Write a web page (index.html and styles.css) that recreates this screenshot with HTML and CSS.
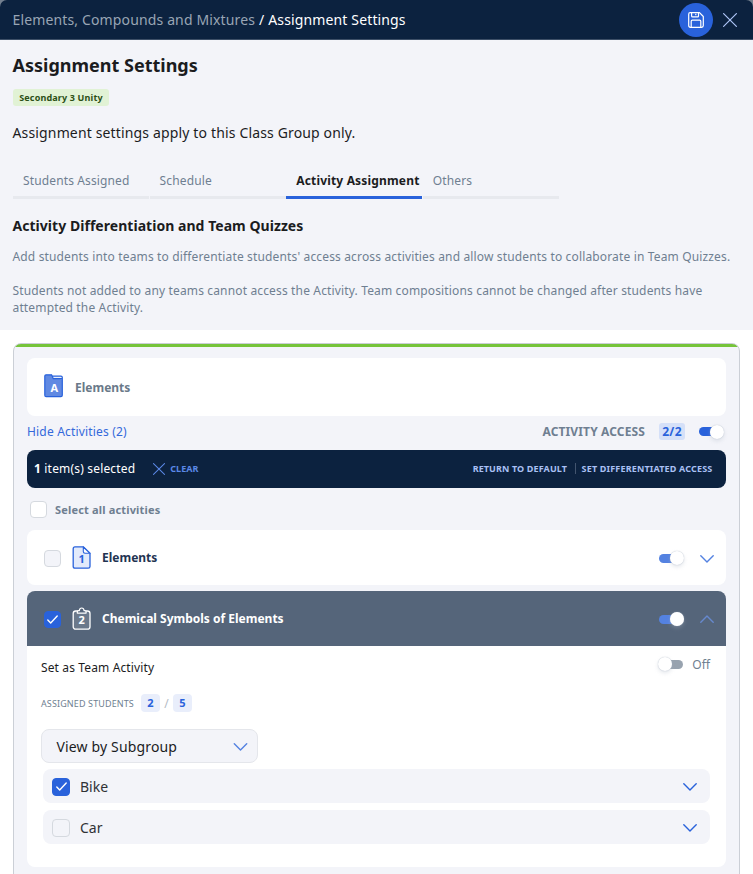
FILE: index.html
```html
<!DOCTYPE html>
<html lang="en">
<head>
<meta charset="utf-8">
<title>Assignment Settings</title>
<link rel="stylesheet" href="styles.css">
</head>
<body>
<svg width="0" height="0" class="defs">
  <symbol id="chevron" viewBox="0 0 14 8"><path d="M.8 .8 7 7 13.2 .8" fill="none" stroke="currentColor" stroke-width="1.4" stroke-linecap="round" stroke-linejoin="round"/></symbol>
  <symbol id="cross" viewBox="0 0 14 14"><path d="M.6.6 13.4 13.4M13.4.6.6 13.4" fill="none" stroke="currentColor" stroke-width="1.2" stroke-linecap="round"/></symbol>
  <symbol id="check" viewBox="0 0 11 9"><path d="M.8 4.9 3.7 7.9 10.2.9" fill="none" stroke="#fff" stroke-width="1.4" stroke-linecap="round" stroke-linejoin="round"/></symbol>
</svg>
<div class="backdrop">
<header class="topbar">
  <div class="crumbs"><span class="crumb-parent">Elements, Compounds and Mixtures</span><span class="crumb-current">/ Assignment Settings</span></div>
  <button class="save" aria-label="Save"><svg width="16" height="16" viewBox="0 0 16 16" fill="none" stroke="#fff" stroke-width="1.2" stroke-linejoin="round"><path d="M2.2.7H11.5L15.3 4.5V13.6Q15.3 15.3 13.6 15.3H2.4Q.7 15.3 .7 13.6V2.2Q.7.7 2.2.7Z"/><path d="M3.6.8V4Q3.6 4.9 4.5 4.9H9.6Q10.5 4.9 10.5 4V.8M7.8 1.8V3.3M3.2 15.2V9.2Q3.2 8.1 4.3 8.1H11.7Q12.8 8.1 12.8 9.2V15.2"/></svg></button>
  <svg class="close" width="14" height="14"><use href="#cross"/></svg>
</header>
</div>
<section class="intro">
  <h1>Assignment Settings</h1>
  <span class="tag"><span>Secondary 3 Unity</span></span>
  <p class="lead">Assignment settings apply to this Class Group only.</p>
  <nav class="tabs">
    <a class="tab"><span>Students Assigned</span></a>
    <a class="tab"><span>Schedule</span></a>
    <a class="tab active"><span>Activity Assignment</span></a>
    <a class="tab"><span>Others</span></a>
  </nav>
  <h2>Activity Differentiation and Team Quizzes</h2>
  <p class="note">Add students into teams to differentiate students' access across activities and allow students to collaborate in Team Quizzes.</p>
  <p class="note">Students not added to any teams cannot access the Activity. Team compositions cannot be changed after students have<br>attempted the Activity.</p>
</section>
<main class="panel">
  <div class="section-card">
    <svg width="20" height="24" viewBox="0 0 20 24"><path d="M2.2.7H7.8L9.3 4.2 18.2 5.2V21.2Q18.2 22.6 16.8 22.6H2.2Q.8 22.6.8 21.2V2Q.8.7 2.2.7Z" fill="#6089e2"/><path d="M8.8 2.2H18.2V5H9.5Z" fill="#e9effb"/><path d="M2 .8H7.6L9.3 4.7H18.3V21.3Q18.3 22.7 16.9 22.7H2.1Q.8 22.7.8 21.3V2Q.8.8 2 .8ZM8.2 2.1H17Q18.3 2.1 18.3 3.4V5" fill="none" stroke="#2962db" stroke-width="1.2"/><text x="10.2" y="17.5" class="icon-letter">A</text></svg>
    <span>Elements</span>
  </div>
  <div class="access-row">
    <a class="hide">Hide Activities (2)</a>
    <span class="access-label">ACTIVITY ACCESS</span>
    <span class="count">2/2</span>
    <span class="toggle"><i></i></span>
  </div>
  <div class="selection">
    <span class="selected"><b>1</b> item(s) selected</span>
    <svg class="clear-x" width="12" height="12"><use href="#cross"/></svg>
    <span class="clear">CLEAR</span>
    <span class="action ret">RETURN TO DEFAULT</span>
    <span class="action diff">SET DIFFERENTIATED ACCESS</span>
  </div>
  <div class="select-all"><span class="box white"></span><span class="sel-text">Select all activities</span></div>
  <div class="activity">
    <span class="box"></span>
    <svg class="act-icon" width="20" height="24" viewBox="0 0 20 24"><path d="M3 .9H11.4L18 7.2V20.4Q18 22.2 16.2 22.2H3Q1.2 22.2 1.2 20.4V2.7Q1.2.9 3 .9Z" fill="#e2eafb" stroke="#2962db" stroke-width="1.3"/><path d="M11.3 1V5.6Q11.3 7.3 13 7.3H18Z" fill="#fff" stroke="#2962db" stroke-width="1.1" stroke-linejoin="round"/><text x="9.6" y="17.3" class="icon-letter blue">1</text></svg>
    <span class="act-name">Elements</span>
    <span class="toggle soft"><i></i></span>
    <svg class="act-chev" width="14" height="8"><use href="#chevron"/></svg>
  </div>
  <div class="activity open">
    <span class="box on"><svg width="11" height="9"><use href="#check"/></svg></span>
    <svg class="act-icon" width="20" height="24" viewBox="0 0 20 24"><rect x="1.2" y="4" width="16.8" height="18.2" rx="2.5" fill="#6b798b" stroke="#fff" stroke-width="1.3"/><path d="M5.3 6.1V4.9Q5.3 3.6 6.6 3.6H7.3Q7.6 1 9.7 1T12.1 3.6H12.8Q14.1 3.6 14.1 4.9V6.1Z" fill="#55657a" stroke="#fff" stroke-width="1.2" stroke-linejoin="round"/><text x="9.7" y="17.2" class="icon-letter">2</text></svg>
    <span class="act-name">Chemical Symbols of Elements</span>
    <span class="toggle soft"><i></i></span>
    <svg class="act-chev up" width="14" height="8"><use href="#chevron"/></svg>
  </div>
  <div class="details">
    <div class="team-row"><span class="team">Set as Team Activity</span><span class="toggle off"><i></i></span><span class="off-text">Off</span></div>
    <div class="assigned"><span class="assigned-label">ASSIGNED STUDENTS</span><b>2</b><em>/</em><b>5</b></div>
    <div class="dropdown"><span>View by Subgroup</span><svg width="15" height="8"><use href="#chevron"/></svg></div>
    <div class="group"><span class="box on"><svg width="11" height="9"><use href="#check"/></svg></span><span>Bike</span><svg class="g-chev" width="14" height="8"><use href="#chevron"/></svg></div>
    <div class="group"><span class="box"></span><span>Car</span><svg class="g-chev" width="14" height="8"><use href="#chevron"/></svg></div>
  </div>
</main>
</body>
</html>
```
FILE: styles.css
```css
* { box-sizing: border-box; }
html, body { margin: 0; height: 874px; overflow: hidden; }
body { font-family: "Noto Sans", sans-serif; font-size: 12px; color: #1b1c1e; background: #fff; }
.defs { display: block; position: absolute; }
.backdrop { background: #74808f; }
svg { display: block; flex: none; }
span, a { white-space: nowrap; }

.topbar { height: 40px; display: flex; align-items: center; background: #0c223f; border-bottom: 1px solid #3d4f67; border-radius: 7px 7px 0 0; padding: 0 16px 0 12.5px; }
.crumbs { flex: 1; display: flex; gap: 4px; font-size: 14px; letter-spacing: .14px; color: #fff; }
.crumb-parent { color: #99a5b4; }
.save { width: 34px; height: 34px; margin: 1px 10px 0 0; padding: 0; border: 0; border-radius: 50%; background: #2962db; display: grid; place-items: center; }
.close { color: #adc4f5; margin-top: 1px; }

.intro { height: 290px; background: #f3f4f9; padding: 12px 13px 0; }
h1 { margin: 0 0 0 -.5px; font-size: 18px; line-height: 26px; font-weight: 700; }
.tag { display: flex; align-items: center; justify-content: center; width: 96px; height: 17px; margin-top: 11px; border-radius: 3px; background: #e1f2d5; color: #2b4f16; font-size: 9px; font-weight: 700; letter-spacing: .16px; }
.lead { margin: 17px 0 0 -.5px; font-size: 14px; line-height: 20px; letter-spacing: .15px; }
.tabs { display: grid; grid-template-columns: repeat(4, 136px); column-gap: .6px; height: 36px; margin-top: 20px; }
.tab { padding-left: 10px; height: 36px; border-bottom: 3px solid #e7e9ee; color: #6f7f91; letter-spacing: .13px; }
.tab.active { color: #1b1c1e; font-weight: 700; letter-spacing: .17px; border-color: #2962db; }
.tab span { display: block; line-height: 35px; }
h2 { margin: 17px 0 0 -.5px; font-size: 14px; line-height: 20px; font-weight: 700; letter-spacing: .04px; }
.note { margin: 12px 0 17px -.5px; line-height: 17px; color: #6f7f91; letter-spacing: .15px; }
.note + .note { margin-top: 17px; }

.panel { height: 560px; margin: 13px 13px 0; border: 1px solid #cbcfd6; border-radius: 8px; background: linear-gradient(#76c43a 3px, #f3f4f9 3px); padding: 14px 13px; }
.section-card { height: 58px; border-radius: 8px; background: #fff; display: flex; align-items: center; padding: 0 17px; gap: 11px; font-weight: 700; color: #6a7989; }
.section-card svg { margin-top: -3px; }
.icon-letter { font: 700 11px "Noto Sans", sans-serif; fill: #fff; text-anchor: middle; }
.icon-letter.blue { fill: #2962db; }
.access-row { height: 34px; display: flex; align-items: center; color: #6f7f91; padding: 0 2px 3px 0; }
.hide { flex: 1; color: #3469db; letter-spacing: .18px; }
.access-label { font-weight: 700; letter-spacing: .13px; }
.count { width: 26px; height: 17px; border-radius: 3px; background: #d5e0f8; color: #2962db; font-weight: 700; letter-spacing: .3px; line-height: 17px; text-align: center; margin: 0 14px; }
.toggle { width: 25px; height: 14px; display: grid; align-items: center; flex: none; }
.toggle::before { content: ""; grid-area: 1 / 1; width: 20px; height: 9px; border-radius: 4.5px; background: #2962db; }
.toggle i { grid-area: 1 / 1; justify-self: end; width: 14px; height: 14px; border-radius: 50%; background: #fff; box-shadow: 0 0 1px #aab4c4, 0 2px 4px #aab4c455; }
.toggle.soft::before { background: #5482e1; }
.toggle.off::before { justify-self: end; background: #98a3af; }
.toggle.off i { justify-self: start; }

.selection { height: 38px; display: flex; align-items: center; background: #0c223f; border-radius: 8px; color: #fff; padding: 0 13.5px 1px 7px; }
.selected { letter-spacing: .18px; }
.clear-x { margin-left: 18px; color: #5b88e6; }
.clear { margin-left: 5px; flex: 1; font-size: 9px; font-weight: 700; color: #5b88e6; }
.action { font-size: 9px; font-weight: 700; color: #a9c0f4; }
.ret { letter-spacing: .12px; }
.diff { letter-spacing: .17px; border-left: 1px solid #43556f; margin-left: 7.5px; padding-left: 6px; line-height: 11px; }
.select-all { height: 42px; display: flex; align-items: center; padding-left: 3px; gap: 8px; color: #6f7f91; font-weight: 700; font-size: 11px; letter-spacing: .17px; }
.box { width: 17px; height: 17px; border: 1px solid #d5d9df; border-radius: 4px; background: #f3f4f9; display: grid; place-items: center; flex: none; }
.box.white { background: #fff; }
.box.on { background: #2962db; border-color: #2962db; }
.activity { height: 55px; border-radius: 8px; background: #fff; display: flex; align-items: center; padding: 0 12px 0 17px; }
.activity .box, .activity .toggle { margin-top: 1px; }
.act-icon { margin: 0 10px 0 11px; }
.act-name { flex: 1; font-weight: 700; color: #1f3452; }
.act-chev { color: #5482e1; margin: 2px 0 0 16.5px; }
.activity.open { margin-top: 6px; background: #55657a; border-radius: 8px 8px 0 0; }
.open .act-name { color: #fff; }
.act-chev.up { transform: rotate(180deg); margin: 0 0 0 16.5px; color: #6689ce; }

.details { height: 221px; background: #fff; border-radius: 0 0 8px 8px; padding: 7px 16px 0 14px; }
.team-row { height: 30px; display: flex; align-items: center; }
.team { flex: 1; letter-spacing: .13px; margin-top: -1px; }
.team-row .toggle { margin-top: -8px; }
.off-text { margin: -7px 0 0 9.5px; color: #6f7f91; }
.assigned { height: 18px; display: flex; align-items: center; margin-top: 11px; color: #6f7f91; }
.assigned-label { font-size: 9px; letter-spacing: .12px; margin-right: 7px; }
.assigned b { width: 19px; height: 18px; border-radius: 4px; background: #e9eefb; color: #2962db; font-size: 11px; line-height: 18px; text-align: center; }
.assigned em { width: 13px; text-align: center; font-style: normal; color: #b4bcc5; }
.dropdown { width: 217px; height: 34px; margin-top: 17px; padding: 0 9px 0 14.5px; display: flex; align-items: center; justify-content: space-between; background: #f3f4f9; border: 1px solid #e4e6eb; border-radius: 8px; font-size: 14px; letter-spacing: .15px; color: #1b1c1e; }
.dropdown svg { color: #5482e1; margin-top: 2px; }
.group { height: 34px; margin: 6px 0 0 2px; padding: 0 13px 0 9px; display: flex; align-items: center; gap: 10px; background: #f3f4f9; border-radius: 8px; font-size: 14px; color: #303236; }
.group + .group { margin-top: 7px; }
.group .box { width: 18px; height: 18px; margin-top: 1px; }
.g-chev { margin: 1px 0 0 auto; color: #2962db; }
```
